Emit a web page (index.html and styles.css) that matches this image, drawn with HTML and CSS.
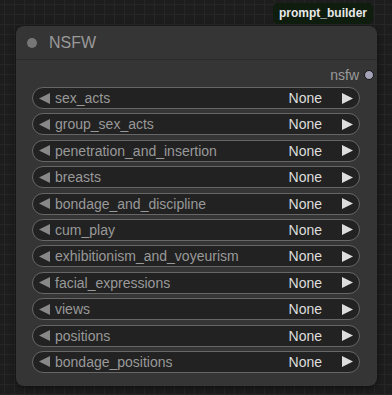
FILE: index.html
```html
<!DOCTYPE html>
<html>

<head>
    <title>NSFW node</title>
    <link rel="stylesheet" href="styles.css">
</head>

<body>
    <div class="canvas">
        <div class="badge-row">
            <div class="badge">prompt_builder</div>
        </div>

        <div class="node">
            <div class="node-title">
                <span class="title-dot"></span>
                <span class="title-text">NSFW</span>
            </div>

            <div class="node-body">
                <div class="output-row">
                    <span class="output-label">nsfw</span>
                    <span class="output-dot"></span>
                </div>

                <div class="widgets">
                    <div class="widget">
                        <svg class="arrow-left" width="11" height="11" viewBox="0 0 10 10"><polygon points="10,0 10,10 0,5" /></svg>
                        <span class="widget-label">sex_acts</span>
                        <span class="widget-value">None</span>
                        <svg class="arrow-right" width="11" height="11" viewBox="0 0 10 10"><polygon points="0,0 0,10 10,5" /></svg>
                    </div>
                    <div class="widget">
                        <svg class="arrow-left" width="11" height="11" viewBox="0 0 10 10"><polygon points="10,0 10,10 0,5" /></svg>
                        <span class="widget-label">group_sex_acts</span>
                        <span class="widget-value">None</span>
                        <svg class="arrow-right" width="11" height="11" viewBox="0 0 10 10"><polygon points="0,0 0,10 10,5" /></svg>
                    </div>
                    <div class="widget">
                        <svg class="arrow-left" width="11" height="11" viewBox="0 0 10 10"><polygon points="10,0 10,10 0,5" /></svg>
                        <span class="widget-label">penetration_and_insertion</span>
                        <span class="widget-value">None</span>
                        <svg class="arrow-right" width="11" height="11" viewBox="0 0 10 10"><polygon points="0,0 0,10 10,5" /></svg>
                    </div>
                    <div class="widget">
                        <svg class="arrow-left" width="11" height="11" viewBox="0 0 10 10"><polygon points="10,0 10,10 0,5" /></svg>
                        <span class="widget-label">breasts</span>
                        <span class="widget-value">None</span>
                        <svg class="arrow-right" width="11" height="11" viewBox="0 0 10 10"><polygon points="0,0 0,10 10,5" /></svg>
                    </div>
                    <div class="widget">
                        <svg class="arrow-left" width="11" height="11" viewBox="0 0 10 10"><polygon points="10,0 10,10 0,5" /></svg>
                        <span class="widget-label">bondage_and_discipline</span>
                        <span class="widget-value">None</span>
                        <svg class="arrow-right" width="11" height="11" viewBox="0 0 10 10"><polygon points="0,0 0,10 10,5" /></svg>
                    </div>
                    <div class="widget">
                        <svg class="arrow-left" width="11" height="11" viewBox="0 0 10 10"><polygon points="10,0 10,10 0,5" /></svg>
                        <span class="widget-label">cum_play</span>
                        <span class="widget-value">None</span>
                        <svg class="arrow-right" width="11" height="11" viewBox="0 0 10 10"><polygon points="0,0 0,10 10,5" /></svg>
                    </div>
                    <div class="widget">
                        <svg class="arrow-left" width="11" height="11" viewBox="0 0 10 10"><polygon points="10,0 10,10 0,5" /></svg>
                        <span class="widget-label">exhibitionism_and_voyeurism</span>
                        <span class="widget-value">None</span>
                        <svg class="arrow-right" width="11" height="11" viewBox="0 0 10 10"><polygon points="0,0 0,10 10,5" /></svg>
                    </div>
                    <div class="widget">
                        <svg class="arrow-left" width="11" height="11" viewBox="0 0 10 10"><polygon points="10,0 10,10 0,5" /></svg>
                        <span class="widget-label">facial_expressions</span>
                        <span class="widget-value">None</span>
                        <svg class="arrow-right" width="11" height="11" viewBox="0 0 10 10"><polygon points="0,0 0,10 10,5" /></svg>
                    </div>
                    <div class="widget">
                        <svg class="arrow-left" width="11" height="11" viewBox="0 0 10 10"><polygon points="10,0 10,10 0,5" /></svg>
                        <span class="widget-label">views</span>
                        <span class="widget-value">None</span>
                        <svg class="arrow-right" width="11" height="11" viewBox="0 0 10 10"><polygon points="0,0 0,10 10,5" /></svg>
                    </div>
                    <div class="widget">
                        <svg class="arrow-left" width="11" height="11" viewBox="0 0 10 10"><polygon points="10,0 10,10 0,5" /></svg>
                        <span class="widget-label">positions</span>
                        <span class="widget-value">None</span>
                        <svg class="arrow-right" width="11" height="11" viewBox="0 0 10 10"><polygon points="0,0 0,10 10,5" /></svg>
                    </div>
                    <div class="widget">
                        <svg class="arrow-left" width="11" height="11" viewBox="0 0 10 10"><polygon points="10,0 10,10 0,5" /></svg>
                        <span class="widget-label">bondage_positions</span>
                        <span class="widget-value">None</span>
                        <svg class="arrow-right" width="11" height="11" viewBox="0 0 10 10"><polygon points="0,0 0,10 10,5" /></svg>
                    </div>
                </div>
            </div>
        </div>
    </div>
</body>

</html>
```

FILE: styles.css
```css
body {
    margin: 0;
    padding: 0;
    font-family: "Liberation Sans", Arial, sans-serif;
    background-color: #1d1d1d;
    background-image:
        linear-gradient(to right, #262626 1px, transparent 1px),
        linear-gradient(to bottom, #262626 1px, transparent 1px);
    background-size: 10px 10px;
    background-position: 4px 4px;
}

.canvas {
    width: 392px;
    height: 395px;
    padding-top: 3px;
    box-sizing: border-box;
}

.badge-row {
    display: flex;
    justify-content: flex-end;
    padding-right: 19px;
    margin-bottom: 2px;
}

.badge {
    height: 21px;
    line-height: 21px;
    padding: 0 6px;
    background-color: #0e1d0e;
    color: #e8e8e8;
    font-size: 12px;
    font-weight: bold;
    border-radius: 5px;
}

.node {
    margin-left: 16px;
    width: 361px;
    height: 360px;
    background-color: #353535;
    border-radius: 8px;
    box-shadow: 0px 2px 6px 0px rgba(0, 0, 0, 0.5);
}

.node-title {
    height: 33px;
    display: flex;
    align-items: center;
    border-bottom: 1px solid #2c2c2c;
}

.title-dot {
    flex-shrink: 0;
    width: 10px;
    height: 10px;
    border-radius: 50%;
    background-color: #777;
    margin-left: 11px;
}

.title-text {
    margin-left: 12px;
    color: #999;
    font-size: 16px;
}

.node-body {
    padding: 4px 17px 0 16px;
}

.output-row {
    height: 22px;
    display: flex;
    align-items: center;
    justify-content: flex-end;
    margin-right: -14px;
}

.output-label {
    color: #999;
    font-size: 14px;
}

.output-dot {
    flex-shrink: 0;
    width: 8px;
    height: 8px;
    border-radius: 50%;
    background-color: #a3a2b8;
    border: 1.5px solid #161616;
    margin-left: 5px;
}

.widgets {
    margin-top: 1px;
    display: flex;
    flex-direction: column;
    gap: 4.4px;
}

.widget {
    height: 22px;
    box-sizing: border-box;
    border: 1px solid #666;
    border-radius: 11px;
    background-color: #222;
    display: flex;
    align-items: center;
    padding: 0 6px;
    font-size: 14px;
}

.arrow-left {
    display: block;
    flex-shrink: 0;
    fill: #888;
}

.arrow-right {
    display: block;
    flex-shrink: 0;
    fill: #ddd;
    margin-left: 20px;
}

.widget-label {
    margin-left: 5px;
    color: #999;
    flex: 1;
}

.widget-value {
    color: #ddd;
}
```
